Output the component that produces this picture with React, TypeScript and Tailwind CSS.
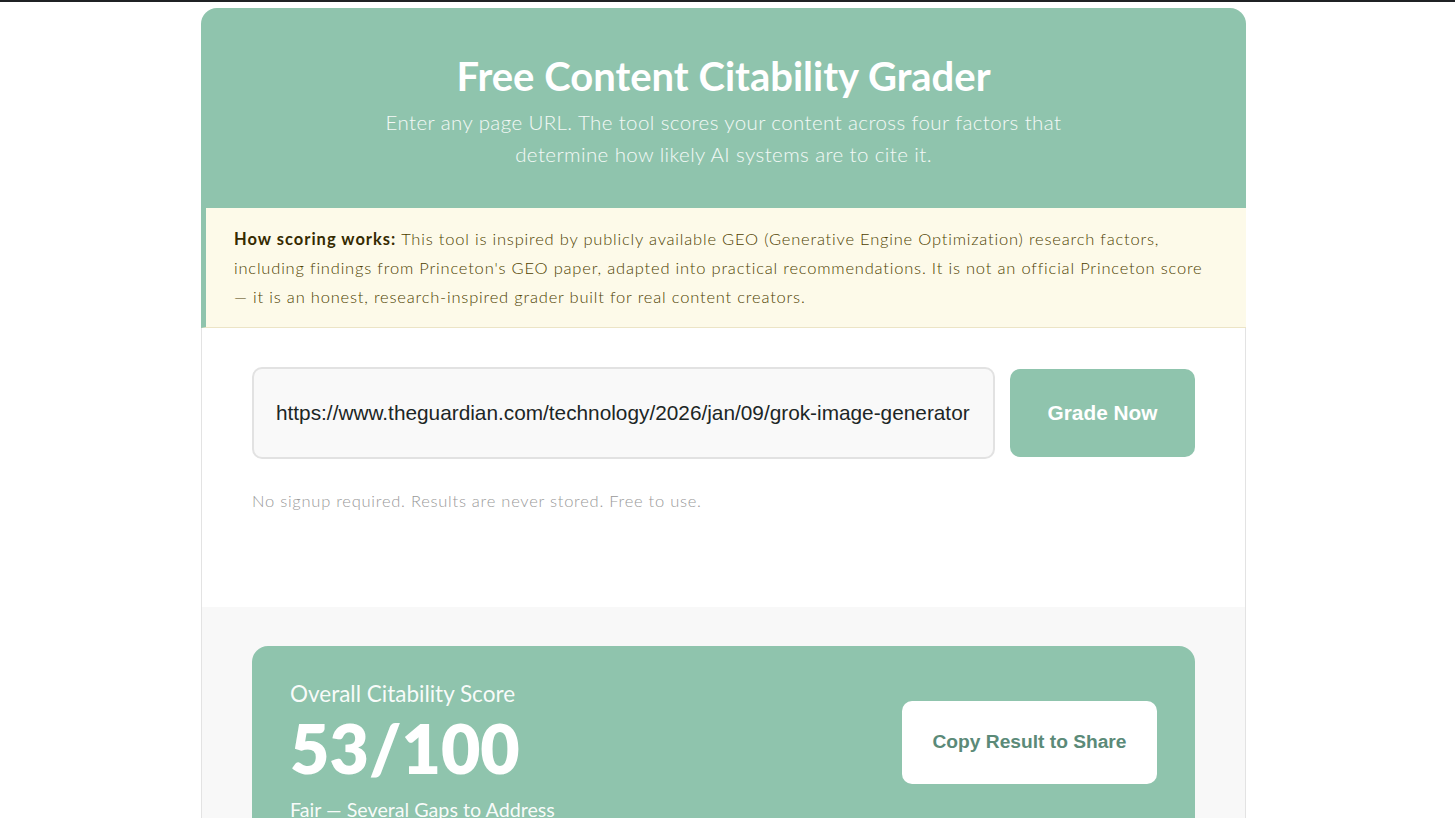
import React from 'react';

const GREEN = 'bg-[#8fc4ad]';

const Header = () => (
  <div className={`${GREEN} rounded-t-[16px] px-8 pt-[45px] pb-[38px] text-center`}>
    <h1 className="text-[40px] font-bold leading-[46px] text-white">Free Content Citability Grader</h1>
    <p className="mt-[7px] text-[20.5px] font-light leading-[32px] tracking-[0.4px] text-white/90">
      Enter any page URL. The tool scores your content across four factors that
      <br />
      determine how likely AI systems are to cite it.
    </p>
  </div>
);

const Notice = () => (
  <div className="border-b border-l-[5px] border-b-[#ece4c6] border-l-[#8fc4ad] bg-[#fdfae9] px-[28px] pt-[17px] pb-[15px] text-[16.5px] font-light leading-[29px] tracking-[0.8px] text-[#4e3f00]">
    <strong className="font-bold tracking-[1px] text-[#352a00]">How scoring works:</strong> This tool is inspired by publicly
    available GEO (Generative Engine Optimization) research factors,
    <br />
    including findings from Princeton's GEO paper, adapted into practical recommendations. It is not an official Princeton score
    <br />
    — it is an honest, research-inspired grader built for real content creators.
  </div>
);

const UrlForm = () => (
  <div className="border-x border-[#e3e3e3] bg-white px-[50px] pt-[39px] pb-[95px]">
    <div className="flex items-center gap-[15px]">
      <input
        type="text"
        readOnly
        value="https://www.theguardian.com/technology/2026/jan/09/grok-image-generator"
        className="h-[92px] flex-1 rounded-[10px] border-2 border-[#e2e2e2] bg-[#f9f9f9] px-[22px] font-['Liberation_Sans',Arial,sans-serif] text-[20.8px] text-[#1c2625] outline-none"
      />
      <button className="h-[88px] w-[185px] rounded-[10px] bg-[#8fc4ad] font-['Liberation_Sans',Arial,sans-serif] text-[20.8px] font-bold text-white">
        Grade Now
      </button>
    </div>
    <p className="mt-[31px] text-[16.5px] font-light leading-[22px] tracking-[0.75px] text-[#999999]">
      No signup required. Results are never stored. Free to use.
    </p>
  </div>
);

const ScoreCard = () => (
  <div className="border-x border-[#e3e3e3] bg-[#f8f8f8] px-[50px] pt-[39px] pb-10">
    <div className={`${GREEN} flex items-center justify-between rounded-[16px] px-[38px] pt-[34px] pb-[40px]`}>
      <div className="text-white">
        <p className="text-[22.5px] leading-[28px] text-white/95">Overall Citability Score</p>
        <p className="text-[68px] font-extrabold leading-[80px]">53/100</p>
        <p className="mt-[9px] text-[19.7px] leading-[26px] text-white/95">Fair — Several Gaps to Address</p>
      </div>
      <button className="mt-[-18px] h-[83px] w-[255px] rounded-[10px] bg-white font-['Liberation_Sans',Arial,sans-serif] text-[19.2px] font-bold text-[#5b8a78]">
        Copy Result to Share
      </button>
    </div>
  </div>
);

export default function App() {
  return (
    <div className="min-h-screen bg-white font-['Lato','Open_Sans',sans-serif]">
      <div className="h-[2px] bg-[#1f2124]" />
      <div className="ml-[201px] mt-[6px] w-[1045px]">
        <Header />
        <Notice />
        <UrlForm />
        <ScoreCard />
      </div>
    </div>
  );
}
